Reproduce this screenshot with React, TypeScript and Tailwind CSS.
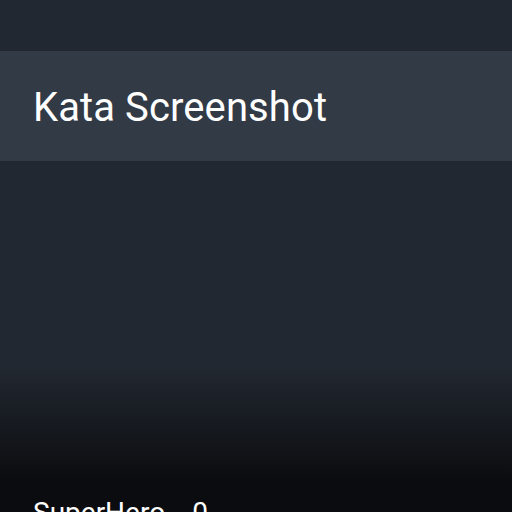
export default function App() {
  return (
    <div className="w-[512px] h-[512px] overflow-hidden flex flex-col bg-[#222831] font-['Roboto',sans-serif] text-white">
      <div className="h-[51px] shrink-0" />
      <div className="h-[110px] shrink-0 bg-[#323a46] flex items-center px-[33px]">
        <h1 className="text-[40px] leading-none tracking-[0.1px] mt-[3px]">Kata Screenshot</h1>
      </div>
      <div className="flex-1 bg-[linear-gradient(to_bottom,#222831_0px,#222831_205px,#0b0c0f_320px)] pt-[338px]">
        <div className="flex gap-[27px] px-[33px] text-[28px] leading-none">
          <span>SuperHero</span>
          <span>0</span>
        </div>
      </div>
    </div>
  );
}
